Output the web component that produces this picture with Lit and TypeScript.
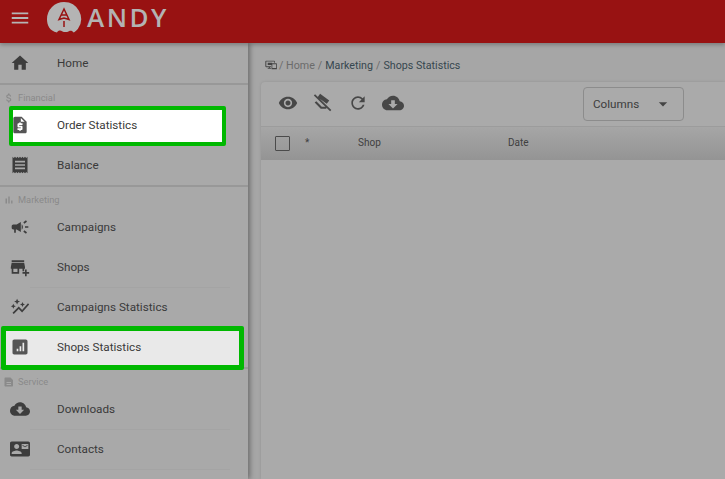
import { LitElement, html, css, svg } from "lit";
import { customElement } from "lit/decorators.js";

const P: Record<string, string> = {
  menu: "M3 18h18v-2H3v2zm0-5h18v-2H3v2zm0-7v2h18V6H3z",
  home: "M10 20v-6h4v6h5v-8h3L12 3 2 12h3v8z",
  dollar: "M11.8 10.9c-2.27-.59-3-1.2-3-2.15 0-1.09 1.01-1.85 2.7-1.85 1.78 0 2.44.85 2.5 2.1h2.21c-.07-1.72-1.12-3.3-3.21-3.81V3h-3v2.16c-1.94.42-3.5 1.68-3.5 3.61 0 2.31 1.91 3.46 4.7 4.13 2.5.6 3 1.48 3 2.41 0 .69-.49 1.79-2.7 1.79-2.06 0-2.87-.92-2.98-2.1h-2.2c.12 2.19 1.76 3.42 3.68 3.83V21h3v-2.15c1.95-.37 3.5-1.5 3.5-3.55 0-2.84-2.43-3.81-4.7-4.4z",
  quote: "M14 2H6c-1.1 0-1.99.9-1.99 2L4 20c0 1.1.89 2 1.99 2H18c1.1 0 2-.9 2-2V8l-6-6zm1 10h-4v1h3c.55 0 1 .45 1 1v3c0 .55-.45 1-1 1h-1v1h-2v-1H9v-2h4v-1h-3c-.55 0-1-.45-1-1v-3c0-.55.45-1 1-1h1V9h2v1h2v2zm-2-4V3.5L17.5 8H13z",
  receipt: "M18 17H6v-2h12v2zm0-4H6v-2h12v2zm0-4H6V7h12v2zM3 22l1.5-1.5L6 22l1.5-1.5L9 22l1.5-1.5L12 22l1.5-1.5L15 22l1.5-1.5L18 22l1.5-1.5L21 22V2l-1.5 1.5L18 2l-1.5 1.5L15 2l-1.5 1.5L12 2l-1.5 1.5L9 2 7.5 3.5 6 2 4.5 3.5 3 2v20z",
  bars: "M5 9.2h3V19H5zM10.6 5h2.8v14h-2.8zm5.6 8H19v6h-2.8z",
  campaign: "M18 11v2h4v-2h-4zm-2 6.61c.96.71 2.21 1.65 3.2 2.39.4-.53.8-1.07 1.2-1.6-.99-.74-2.24-1.68-3.2-2.4-.4.54-.8 1.08-1.2 1.61zM20.4 5.6c-.4-.53-.8-1.07-1.2-1.6-.99.74-2.24 1.68-3.2 2.4.4.53.8 1.07 1.2 1.6.96-.72 2.21-1.65 3.2-2.4zM4 9c-1.1 0-2 .9-2 2v2c0 1.1.9 2 2 2h1v4h2v-4h1l5 3V6L8 9H4zm11.5 3c0-1.33-.58-2.53-1.5-3.35v6.69c.92-.81 1.5-2.01 1.5-3.34z",
  shop: "M15 17h2v-3h1v-2l-1-5H2l-1 5v2h1v6h9v-6h4v3zM9 18H4v-4h5v4zM2 4h15v2H2V4zm18 14v-3h-2v3h-3v2h3v3h2v-3h3v-2h-3z",
  graph: "M14.06 9.94L12 9l2.06-.94L15 6l.94 2.06L18 9l-2.06.94L15 12l-.94-2.06zM4 14l.94-2.06L7 11l-2.06-.94L4 8l-.94 2.06L1 11l2.06.94L4 14zm4.5-5l1.09-2.41L12 5.5 9.59 4.41 8.5 2 7.41 4.41 5 5.5l2.41 1.09L8.5 9zm-4 11.5l6-6.01 4 4L23 8.93l-1.41-1.41-7.09 7.97-4-4L3 19l1.5 1.5z",
  stats: "M5 3h14c1.1 0 2 .9 2 2v14c0 1.1-.9 2-2 2H5c-1.1 0-2-.9-2-2V5c0-1.1.9-2 2-2zm3 11v3h2v-3H8zm3.500-3v6h2v-6h-2zM15 7v10h2V7h-2z",
  desc: "M5 3h10l5 5v11c0 1.100-.9 2-2 2H5c-1.100 0-2-.9-2-2V5c0-1.100.9-2 2-2zm2 13v2h9v-2H7zm0-4v2h9v-2H7z",
  cloud: "M19.35 10.04C18.67 6.59 15.64 4 12 4 9.11 4 6.6 5.64 5.35 8.04 2.34 8.36 0 10.91 0 14c0 3.31 2.69 6 6 6h13c2.76 0 5-2.24 5-5 0-2.64-2.05-4.78-4.65-4.96zM17 13l-5 5-5-5h3V9h4v4h3z",
  contact: "M21 8V7l-3 2-3-2v1l3 2 3-2zm1-5H2C.9 3 0 3.9 0 5v14c0 1.1.9 2 2 2h20c1.1 0 1.99-.9 1.99-2L24 5c0-1.1-.9-2-2-2zM8 6c1.66 0 3 1.34 3 3s-1.34 3-3 3-3-1.34-3-3 1.34-3 3-3zm6 12H2v-1c0-2 4-3.1 6-3.1s6 1.1 6 3.1v1zm8-6h-8V6h8v6z",
  eye: "M12 4.5C7 4.5 2.73 7.61 1 12c1.73 4.39 6 7.5 11 7.5s9.27-3.11 11-7.5c-1.73-4.39-6-7.5-11-7.5zM12 17c-2.76 0-5-2.24-5-5s2.24-5 5-5 5 2.24 5 5-2.24 5-5 5zm0-8c-1.66 0-3 1.34-3 3s1.34 3 3 3 3-1.34 3-3-1.34-3-3-3z",
  refresh: "M17.65 6.35C16.2 4.9 14.21 4 12 4c-4.42 0-7.99 3.58-7.99 8s3.57 8 7.99 8c3.73 0 6.84-2.55 7.73-6h-2.08c-.82 2.33-3.04 4-5.65 4-3.31 0-6-2.69-6-6s2.69-6 6-6c1.66 0 3.14.69 4.22 1.78L13 11h7V4l-2.35 2.35z",
  layers: "M8.500 1L19.500 9 16.500 13 5.500 5zM2 11.500L4 10l6.500 6.500H16V19H9.300zM1 3L2.500 1.500 22 20.500 20.500 22z",
  screen: "M2 3h15c.8 0 1.400.6 1.400 1.400V7H17V4.500H2.400v9H11V15H9v1.500h2V18H5v-1.500h2V15H2c-.8 0-1.400-.6-1.400-1.400V4.400C.6 3.600 1.200 3 2 3zM13 8h8c.6 0 1 .4 1 1v9c0 .6-.4 1-1 1h-8c-.6 0-1-.4-1-1V9c0-.6.4-1 1-1zm.5 1.500v7h7v-7h-7zM5 7h8v4H5z",
  caret: "M7 10l5 5 5-5z",
};

const icon = (n: string, cls = "") =>
  html`<svg class="ic ${cls}" viewBox="0 0 24 24">${svg`<path d=${P[n]}></path>`}</svg>`;

interface Row { label: string; ic: string; cls?: string; }
const GROUPS: { title?: string; ic?: string; rows: Row[] }[] = [
  { rows: [{ label: "Home", ic: "home" }] },
  { title: "Financial", ic: "dollar", rows: [
    { label: "Order Statistics", ic: "quote", cls: "mark-a" },
    { label: "Balance", ic: "receipt" },
  ] },
  { title: "Marketing", ic: "bars", rows: [
    { label: "Campaigns", ic: "campaign" },
    { label: "Shops", ic: "shop", cls: "rule" },
    { label: "Campaigns Statistics", ic: "graph" },
    { label: "Shops Statistics", ic: "stats", cls: "mark-b" },
  ] },
  { title: "Service", ic: "desc", rows: [
    { label: "Downloads", ic: "cloud", cls: "rule" },
    { label: "Contacts", ic: "contact", cls: "rule" },
  ] },
];

@customElement("app-root")
export class AppRoot extends LitElement {
  static styles = css`
    :host { display: block; width: 725px; height: 479px; overflow: hidden; background: #a6a6a6;
      font-family: Roboto, "Liberation Sans", sans-serif; color: #3c3c3c; }
    .ic { display: block; fill: currentColor; flex: none; }
    header { height: 43px; background: #981212; display: flex; align-items: center; position: relative; z-index: 2;
      box-shadow: 0 2px 4px rgba(0,0,0,.25); color: #b4b4b4; }
    .burger { width: 22px; height: 22px; margin-left: 9px; color: #b5b5b5; margin-top: -7px; }
    .logo { width: 36px; height: 36px; margin-left: 15px; flex: none; margin-top: -6px; }
    .brand { margin-left: 5px; font-family: "Open Sans", sans-serif; font-size: 26px; letter-spacing: 2.500px; color: #b3b3b3;
      font-weight: 600; line-height: 30px; margin-top: -10px; }
    .body { display: flex; height: 436px; }
    nav { width: 248px; flex: none; background: #a9a9a9; box-shadow: 2px 0 5px rgba(0,0,0,.35); position: relative; z-index: 1; }
    .group { border-bottom: 2px solid #989898; }
    .group:last-child { border-bottom: 0; }
    .group-title { height: 20px; display: flex; align-items: center; font-size: 9.300px; color: #8a8a8a; padding-left: 3px; gap: 3px; padding-top: 5px; box-sizing: border-box; }
    .group-title .ic { width: 12px; height: 12px; }
    .row { height: 40px; display: flex; align-items: center; font-size: 11.700px; color: #3a3a3a; position: relative; }
    .rule::after { content: ""; position: absolute; left: 30px; right: 18px; bottom: -1px; height: 1px; background: #a4a4a4; }
    .row .ic { width: 20px; height: 20px; margin-left: 10px; color: #3d3d3d; position: relative; z-index: 1; }
    .row span { margin-left: 27px; position: relative; z-index: 1; }
    .mark-a::before, .mark-b::before { content: ""; position: absolute; border: 5px solid #00b800; border-radius: 2px; box-sizing: border-box; }
    .mark-a::before { left: 9px; width: 217px; top: 1px; height: 40px; background: #fff; border-width: 4.500px; }
    .mark-b::before { left: 1px; width: 243px; top: -1px; height: 44px; background: #e9e9e9; }
    .mark-a .ic, .mark-b .ic { color: #555; }
    main { flex: 1; min-width: 0; padding-left: 13px; background: #a6a6a6; }
    .crumbs { height: 39px; display: flex; align-items: center; font-size: 10.700px; color: #6b6b6b; padding-left: 4px; box-sizing: border-box; padding-top: 5px; }
    .crumbs .ic { width: 13px; height: 13px; color: #444; margin-right: 1px; }
    .crumbs b { font-weight: 400; color: #36474f; }
    .crumbs .sep { margin: 0 3px; }
    .crumbs .sep2 { margin: 0 3px; }
    .card { background: #aaaaaa; height: 398px; border-radius: 4px 0 0 0; box-shadow: 0 0 3px rgba(0,0,0,.12); }
    .tools { height: 45px; display: flex; align-items: center; border-bottom: 1px solid #9c9c9c; box-sizing: border-box; position: relative; padding-bottom: 2px; }
    .tools .ic { width: 20px; height: 20px; color: #474747; }
    .tools .t1 { margin-left: 16.500px; }
    .tools .t2 { margin-left: 15px; }
    .tools .t3 { margin-left: 15px; }
    .tools .t4 { margin-left: 14px; width: 22px; height: 22px; }
    .select { position: absolute; left: 322px; top: 5px; width: 101px; height: 34px; border: 1px solid #8c8c8c; border-radius: 4px; box-sizing: border-box;
      display: flex; align-items: center; font-size: 11.700px; color: #3c3c3c; padding-left: 9px; }
    .select .ic { width: 20px; height: 20px; position: absolute; right: 10px; top: 6px; color: #444; }
    .thead { height: 33px; background: linear-gradient(#a6a6a6, #949494); display: grid; grid-template-columns: 30px 53px 150px 1fr; align-items: center; font-size: 10px; color: #404040; padding-left: 14px; }
    .thead .cell { margin-top: -2px; }
    .check { width: 15px; height: 15px; border: 1.500px solid #4b4b4b; border-radius: 1px; box-sizing: border-box; }
  `;

  render() {
    return html`
      <header>
        ${icon("menu", "burger")}
        <svg class="logo" viewBox="0 0 36 36">
          <path fill="#b4b4b4" d="M18 1a17 17 0 0 1 14 26.700c-1.500 2-3 3-4.500 3.800-1-1.800-3-2.200-4.500-1.300-1.500.8-3.300 1-5 .8-1.500-.2-2.500-1.800-4.500-1.500-1.200.2-2 1-2.500 2C3.500 30 1 24 1 18A17 17 0 0 1 18 1z"></path>
          <path fill="none" stroke="#981212" stroke-width="1.500" d="M18 8l-5 10.500L18 17l5 1.500zM18 20v6M15.500 14h5"></path>
        </svg>
        <div class="brand">ANDY</div>
      </header>
      <div class="body">
        <nav>
          ${GROUPS.map((g) => html`
            <div class="group">
              ${g.title ? html`<div class="group-title">${icon(g.ic!)}${g.title}</div>` : ""}
              ${g.rows.map((r) => html`<div class="row ${r.cls ?? ""}">${icon(r.ic)}<span>${r.label}</span></div>`)}
            </div>`)}
        </nav>
        <main>
          <div class="crumbs">${icon("screen")}<span>/ Home</span><span class="sep">/</span><b>Marketing</b><span class="sep2">/</span><b>Shops Statistics</b></div>
          <section class="card">
            <div class="tools">
              ${icon("eye", "t1")}${icon("layers", "t2")}${icon("refresh", "t3")}${icon("cloud", "t4")}
              <div class="select">Columns${icon("caret")}</div>
            </div>
            <div class="thead">
              <div class="check"></div>
              <div class="cell">*</div>
              <div class="cell">Shop</div>
              <div class="cell">Date</div>
            </div>
          </section>
        </main>
      </div>
    `;
  }
}
